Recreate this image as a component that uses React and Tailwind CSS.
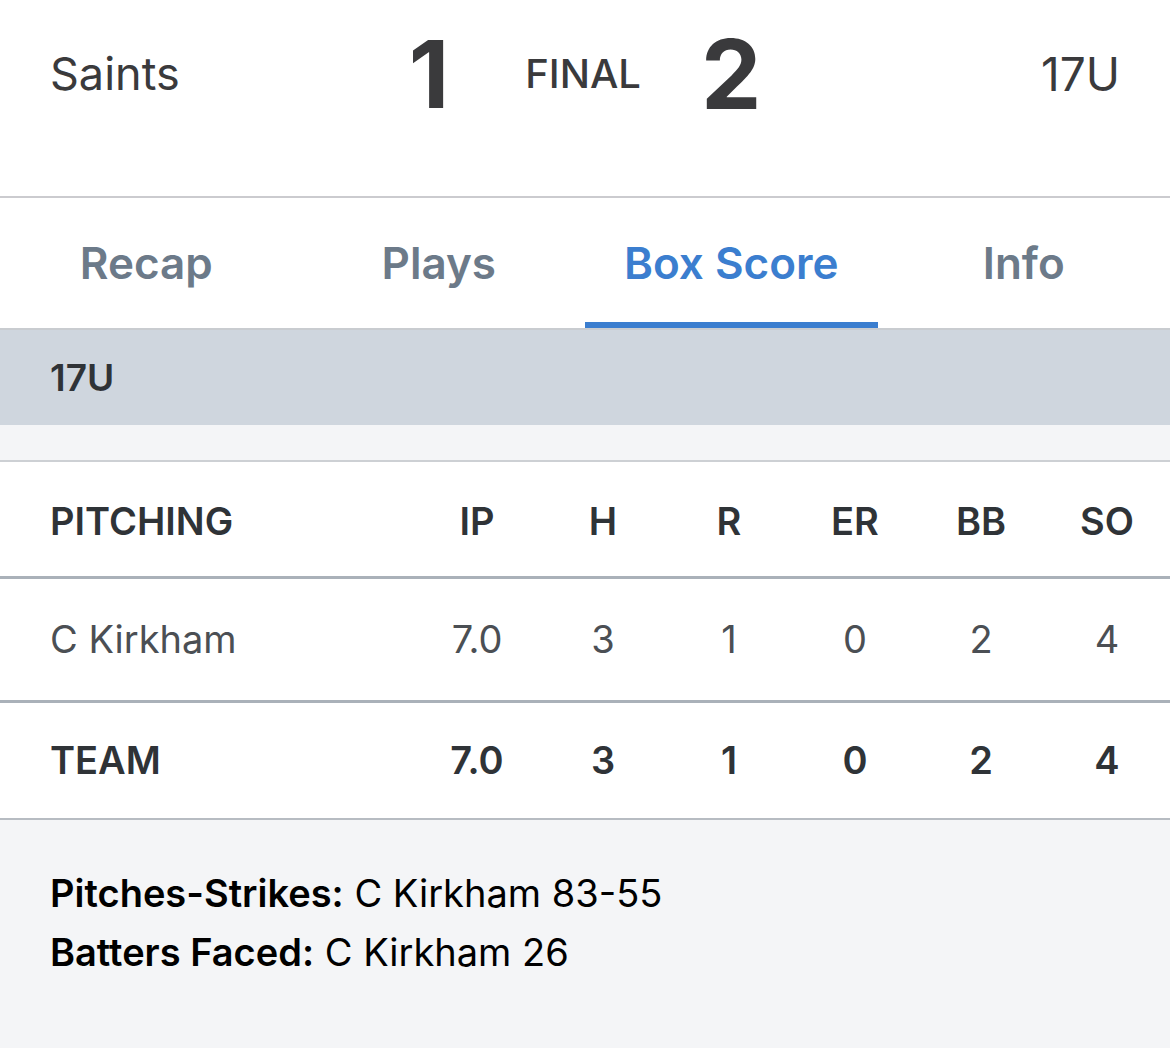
import React from "react";

const cols = ["IP", "H", "R", "ER", "BB", "SO"];
const tabs = ["Recap", "Plays", "Box Score", "Info"];

const StatRow = ({ name, values, className }) => (
  <div className={`flex items-center pl-[50px] ${className}`}>
    <div className="flex-1">{name}</div>
    {values.map((v, i) => (
      <div key={i} className="w-[126px] text-center">
        {v}
      </div>
    ))}
  </div>
);

const App = () => {
  return (
    <div
      className="w-[1170px] h-[1048px] overflow-hidden bg-[#f4f5f7]"
      style={{ fontFamily: "Inter, 'Noto Sans', sans-serif" }}
    >
      {/* score header */}
      <div className="h-[198px] bg-white border-b-2 border-[#cbcbcf] pt-[24px]">
        <div className="grid grid-cols-[1fr_auto_1fr] items-center h-[100px] px-[50px] text-[#3a3a3c]">
          <div className="text-[45px]">Saints</div>
          <div className="flex items-center">
            <span className="text-[94px] font-bold leading-none">1</span>
            <span className="text-[40px] font-medium ml-[76px] mr-[60px]">FINAL</span>
            <span className="text-[96px] font-bold leading-none">2</span>
          </div>
          <div className="text-[46px] text-right">17U</div>
        </div>
      </div>

      {/* tabs */}
      <div className="grid grid-cols-4 h-[132px] bg-white border-b-2 border-[#c9ccd0]">
        {tabs.map((t) => (
          <div
            key={t}
            className={`flex items-center justify-center text-[44px] font-semibold ${
              t === "Box Score"
                ? "text-[#3b7ecf] border-b-[6px] border-[#3b7ecf] pt-[6px]"
                : "text-[#6c7a89]"
            }`}
          >
            {t}
          </div>
        ))}
      </div>

      {/* team band */}
      <div className="h-[95px] bg-[#cfd6de] flex items-center pl-[50px] text-[37px] font-semibold text-[#2f3337]">
        17U
      </div>
      <div className="h-[37px] border-b-2 border-[#cdd0d4]"></div>

      {/* pitching table */}
      <div className="bg-white text-[38px]">
        <StatRow
          name="PITCHING"
          values={cols}
          className="h-[117px] pt-[5px] font-semibold text-[#2f3337] border-b-[3px] border-[#aab1b9]"
        />
        <StatRow
          name="C Kirkham"
          values={["7.0", "3", "1", "0", "2", "4"]}
          className="h-[124px] text-[#4b4f54] border-b-[3px] border-[#aab1b9]"
        />
        <StatRow
          name="TEAM"
          values={["7.0", "3", "1", "0", "2", "4"]}
          className="h-[117px] font-semibold text-[#2f3337] border-b-2 border-[#b7bcc2]"
        />
      </div>

      {/* notes */}
      <div className="pt-[44px] pl-[50px] text-[38px] text-black leading-[59px]">
        <div>
          <span className="font-semibold">Pitches-Strikes:</span> C Kirkham 83-55
        </div>
        <div>
          <span className="font-semibold">Batters Faced:</span> C Kirkham 26
        </div>
      </div>
    </div>
  );
};

export default App;
